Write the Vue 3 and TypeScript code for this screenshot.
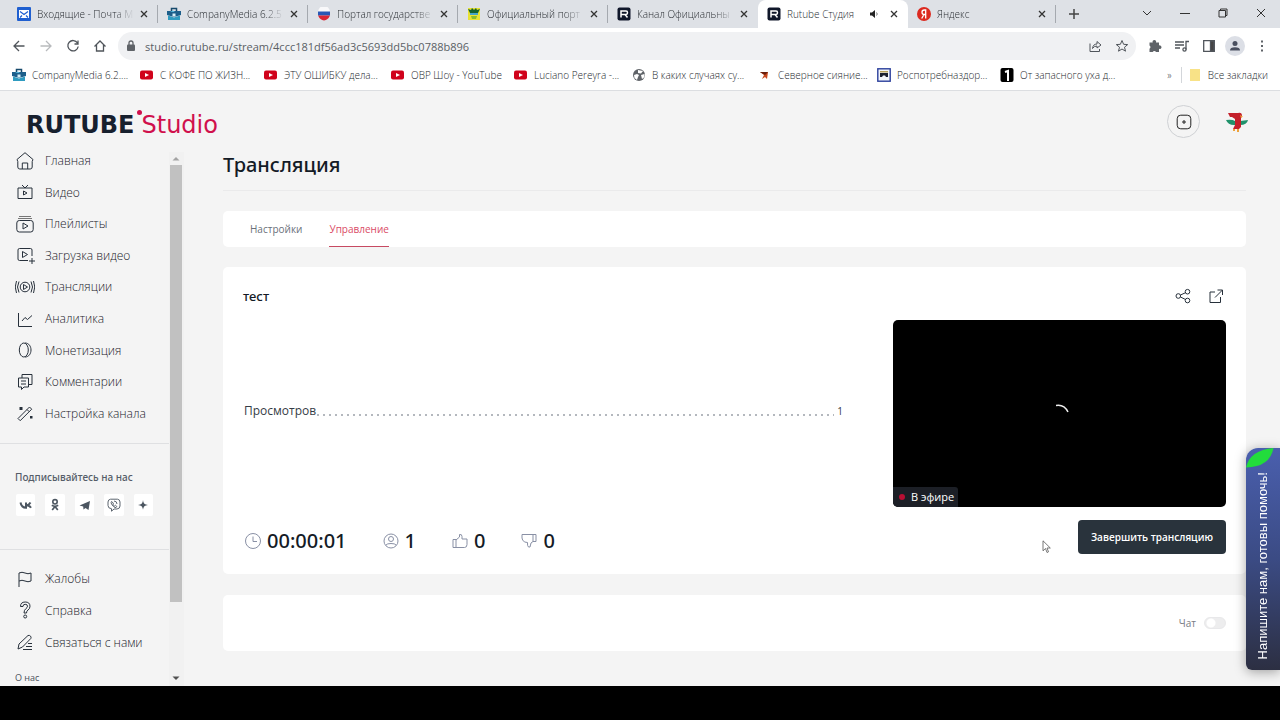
<script setup lang="ts">
import { ref } from 'vue'

interface BrowserTab { title: string; icon: string; active?: boolean; sound?: boolean }
interface LinkItem { label: string; icon: string }

const tabs: BrowserTab[] = [
  { title: 'Входящие - Почта М', icon: 'f-mail' },
  { title: 'CompanyMedia 6.2.5', icon: 'f-case' },
  { title: 'Портал государстве', icon: 'f-flag' },
  { title: 'Официальный порт', icon: 'f-crest' },
  { title: 'Канал Официальны', icon: 'f-rutube' },
  { title: 'Rutube Студия', icon: 'f-rutube', active: true, sound: true },
  { title: 'Яндекс', icon: 'f-yandex' },
]

const bookmarks: LinkItem[] = [
  { label: 'CompanyMedia 6.2....', icon: 'f-case' },
  { label: 'С КОФЕ ПО ЖИЗН...', icon: 'f-youtube' },
  { label: 'ЭТУ ОШИБКУ дела...', icon: 'f-youtube' },
  { label: 'ОВР Шоу - YouTube', icon: 'f-youtube' },
  { label: 'Luciano Pereyra -...', icon: 'f-youtube' },
  { label: 'В каких случаях су...', icon: 'f-globe' },
  { label: 'Северное сияние...', icon: 'f-arrow' },
  { label: 'Роспотребназдор...', icon: 'f-rpn' },
  { label: 'От запасного уха д...', icon: 'f-one' },
]

const mainNav: LinkItem[] = [
  { label: 'Главная', icon: 'n-home' },
  { label: 'Видео', icon: 'n-video' },
  { label: 'Плейлисты', icon: 'n-playlist' },
  { label: 'Загрузка видео', icon: 'n-upload' },
  { label: 'Трансляции', icon: 'n-live' },
  { label: 'Аналитика', icon: 'n-chart' },
  { label: 'Монетизация', icon: 'n-coin' },
  { label: 'Комментарии', icon: 'n-comments' },
  { label: 'Настройка канала', icon: 'n-wand' },
]

const helpNav: LinkItem[] = [
  { label: 'Жалобы', icon: 'n-flag' },
  { label: 'Справка', icon: 'n-help' },
  { label: 'Связаться с нами', icon: 'n-contact' },
]

const socials: LinkItem[] = [
  { label: 'ВКонтакте', icon: 's-vk' },
  { label: 'Одноклассники', icon: 's-ok' },
  { label: 'Telegram', icon: 's-telegram' },
  { label: 'Viber', icon: 's-viber' },
  { label: 'Дзен', icon: 's-zen' },
]

const stats = [
  { name: 'Длительность', icon: 'i-clock', value: '00:00:01' },
  { name: 'Зрители', icon: 'i-user', value: '1' },
  { name: 'Нравится', icon: 'i-like', value: '0' },
  { name: 'Не нравится', icon: 'i-dislike', value: '0' },
]

const address = ref('studio.rutube.ru/stream/4ccc181df56ad3c5693dd5bc0788b896')
const chatOn = ref(false)
</script>

<template>
  <div class="screen">
    <svg class="sprite" aria-hidden="true">
      <symbol id="f-mail" viewBox="0 0 14 14"><rect width="14" height="14" rx="1" fill="#1f5fd0" /><rect x="2" y="3" width="10" height="8" fill="#fff" /><path d="M3 4.500l4 3 4-3M3 10.500l2-2M11 10.500l-2-2" fill="none" stroke="#1f5fd0" stroke-width="1.200" /></symbol>
      <symbol id="f-case" viewBox="0 0 14 14"><path d="M4.500 4V1.500h5V4" fill="none" stroke="#174a6c" stroke-width="1.500" /><path d="M0 4h14v4L7 10 0 8z" fill="#1d5f8b" /><path d="M1 8.500l6 2 6-2V13H1z" fill="#2f9bc0" /><path d="M5.500 6.500h3v3h-3z" fill="#d7eef7" /><path d="M3 5l3-1.500L8 5z" fill="#56b8dc" /></symbol>
      <symbol id="f-flag" viewBox="0 0 14 14"><path d="M1 5a6 6 0 0 1 12 0z" fill="#f8f8fa" /><path d="M1 4.500h12v4H1z" fill="#2858b5" /><path d="M1 8.500h12Q11 13 7 13.500 3 13 1 8.500z" fill="#d92735" /></symbol>
      <symbol id="f-crest" viewBox="0 0 14 14"><path d="M1 1h12v12H1z" fill="#e9e233" /><path d="M1 2l3 1 1-2 2 2 2-2 1 2 3-1-2 4H3z" fill="#14632f" /><path d="M3 6h8v2H3z" fill="#45a5c8" /><path d="M4 9h6l-1 3H5z" fill="#8bbd2c" /></symbol>
      <symbol id="f-rutube" viewBox="0 0 14 14"><rect x=".5" y=".5" width="13" height="13" rx="2" fill="#10172a" /><path d="M4 10.500V4h5q1.500 0 1.500 1.700T9 7.500H4M8 7.500l2.500 3" fill="none" stroke="#fff" stroke-width="1.500" /></symbol>
      <symbol id="f-yandex" viewBox="0 0 14 14"><circle cx="7" cy="7" r="7" fill="#dc2a20" /><path d="M8.700 11.500V3H7.300Q5 3 5 5.200T7.300 7.500h1.400M7 7.500l-2.300 4" fill="none" stroke="#fff" stroke-width="1.300" /></symbol>
      <symbol id="f-youtube" viewBox="0 0 14 14"><rect y="2.500" width="13" height="9" rx="2" fill="#d0021b" /><path d="M5 5l4 2-4 2z" fill="#fff" /></symbol>
      <symbol id="f-globe" viewBox="0 0 14 14"><circle cx="7" cy="7" r="6" fill="#5f6368" /><path d="M2 7l3-1 2 1-1 2-1 3-2.500-2zM6 2l5 1-2 2.500-3-.5zM9 7l3.500-1v3L10 11z" fill="#fff" /></symbol>
      <symbol id="f-arrow" viewBox="0 0 14 14"><path d="M2 4h8L9 11l-2-2-3 2 2-4z" fill="#c8481d" /><path d="M2 4h8L7 7z" fill="#69200e" /></symbol>
      <symbol id="f-rpn" viewBox="0 0 14 14"><rect x=".8" y=".8" width="12.400" height="12.400" fill="#f4f6fb" stroke="#2b3f9c" stroke-width="1.400" /><path d="M3 3h8v1.500H3z" fill="#b7a15c" /><path d="M3 5h8v4H9L8 7.500H6L5 9H3z" fill="#1c2030" /></symbol>
      <symbol id="f-one" viewBox="0 0 14 14"><rect x=".5" width="13" height="14" rx="2" fill="#000" /><path d="M5 4l3-1v10" fill="none" stroke="#fff" stroke-width="2" /></symbol>

      <symbol id="n-home" viewBox="0 0 20 20"><path d="M2 8.500L10 1.700l8 6.800-.8 2V16q0 2-2 2H4.800q-2 0-2-2v-5.500zM7.300 18v-6h5.400v6" /></symbol>
      <symbol id="n-video" viewBox="0 0 20 20"><path d="M3 6h14v10.500H3zM7 3l3 3M13 3l-3 3M8.500 9v4l3.500-2z" /></symbol>
      <symbol id="n-playlist" viewBox="0 0 20 20"><path d="M4 2.500h12M3 4.500h14" stroke="#777" /><rect x="1.800" y="6.500" width="16.400" height="11.500" rx="2.500" /><path d="M8 9v6l5-3z" /></symbol>
      <symbol id="n-upload" viewBox="0 0 20 20"><path d="M17 11V5q0-1.500-1.500-1.500h-11Q3 3.500 3 5v9q0 1.500 1.500 1.500H13M7.500 6.500v6l5-3zM17 13v6M14 16h6" /></symbol>
      <symbol id="n-live" viewBox="0 0 20 20"><circle cx="10" cy="10" r="4.800" /><path d="M8.500 7.500v5l4-2.500zM4 4.500q-3 5.500 0 11M16 4.500q3 5.500 0 11M1.500 4q-2.500 6 0 12M18.500 4q2.500 6 0 12" /></symbol>
      <symbol id="n-chart" viewBox="0 0 20 20"><path d="M3.500 4v13.500H17M7 12l3-3.500 2.500 2L17 6.500" /></symbol>
      <symbol id="n-coin" viewBox="0 0 20 20"><ellipse cx="8.800" cy="10" rx="4.500" ry="7" /><path d="M10 3c4 0 6 3.500 6 7s-2 7-6 7" /></symbol>
      <symbol id="n-comments" viewBox="0 0 20 20"><path d="M3.500 6h10v9H9l-2.500 2.500V15h-3zM7 6V2.500h10v10h-3.500M6 9h5M6 12h5" /></symbol>
      <symbol id="n-wand" viewBox="0 0 20 20"><path d="M3 15.500L14.500 4l2.200 2.200L5.200 17.700zM12 6.500l2.200 2.200" /><path d="M4.500 4h3v3h-3zM15 13h2.500v2.500H15z" fill="#27303b" stroke="none" /></symbol>
      <symbol id="n-flag" viewBox="0 0 20 20"><path d="M4 18V4q3-1.500 6 0t6 0v8q-3 1.500-6 0t-6 0" /></symbol>
      <symbol id="n-help" viewBox="0 0 20 20"><path d="M5.500 6.500Q5.500 2 10.200 2t4.800 4.200q0 2.500-2 3.800-1.500 1-1.500 3H9q0-3 2-4.500 1.500-1 1.500-2.300 0-1.900-2.300-1.900T8 6.500z" /><circle cx="10.200" cy="16.500" r="1.500" /></symbol>
      <symbol id="n-contact" viewBox="0 0 20 20"><path d="M3 17l1-5 9-8.500q1.500-.5 2.500.6t.3 2.400L7.500 15 3 17M8 17.500h9M11 14.500h6M13 11.500h4" /></symbol>

      <symbol id="s-vk" viewBox="0 0 14 14"><path d="M1.500 4.500Q2.500 9.700 7 9.700V4.500M7.500 7.500Q10 7 11.500 4.500M8 7.200q3 .5 4 2.500" fill="none" stroke="#4c5661" stroke-width="2" /></symbol>
      <symbol id="s-ok" viewBox="0 0 14 14"><circle cx="7" cy="3.800" r="2.200" fill="none" stroke="#4c5661" stroke-width="1.600" /><path d="M3.800 7.300q3.200 2 6.400 0M7 8.500L4.200 12M7 8.500L9.800 12" fill="none" stroke="#4c5661" stroke-width="1.700" /></symbol>
      <symbol id="s-telegram" viewBox="0 0 14 14"><path d="M1.500 7.500L12 3l-1.500 9-3-2-2 1.500-.3-3z" fill="#4c5661" /></symbol>
      <symbol id="s-viber" viewBox="0 0 14 14"><path d="M3.500 1.200h7Q13 1.500 13 4v4q0 2.700-3 3H7l-2.500 2.200v-2.500Q1 10.500 1 7.500V4q0-2.500 2.500-2.800zM4.500 3.500q-1 1 .3 3t3.200 3q1.500.3 1.800-1L8.500 7.300l-1 .7Q6 7.300 5.800 6l.7-.8zM7 3q3 .2 3 3" fill="none" stroke="#5c656f" /></symbol>
      <symbol id="s-zen" viewBox="0 0 14 14"><path d="M7 2q.2 4.800 5 5-4.800.2-5 5-.2-4.800-5-5 4.800-.2 5-5z" fill="#4c5661" /></symbol>

      <symbol id="i-clock" viewBox="0 0 18 18"><circle cx="9" cy="9" r="7.500" /><path d="M9 4.500V9.500h4" /></symbol>
      <symbol id="i-user" viewBox="0 0 18 18"><circle cx="9" cy="9" r="7" /><circle cx="9" cy="7" r="2.500" /><path d="M4 13q1-1.500 5-1.500t5 1.500" /></symbol>
      <symbol id="i-like" viewBox="0 0 18 18"><path d="M2 7.500h3v8H2zM5 8l3.500-3V2.500q2.500-.5 2.500 2V7h5v5.500q0 3-2.500 3H5" /></symbol>
      <symbol id="i-dislike" viewBox="0 0 18 18"><path d="M13 2.500h3v7h-3zM13 9.500l-2 1.500-1 4H8.500q-1.300-1-1-4.500L4.500 10Q2 8 2 6V2.500h11" /></symbol>
    </svg>

    <div class="tabstrip">
      <div v-for="tab in tabs" :key="tab.title" class="tab" :class="{ active: tab.active }">
        <svg class="fav"><use :href="'#' + tab.icon" /></svg>
        <span class="tab-title">{{ tab.title }}</span>
        <svg v-if="tab.sound" class="sound" viewBox="0 0 10 10"><path d="M0 3.500h2L5 1v8L2 6.500H0z" fill="#222" /><path d="M6.500 3.500q1.500 1.500 0 3" fill="none" stroke="#777" /></svg>
        <button class="tab-close" aria-label="Закрыть вкладку"><svg viewBox="0 0 8 8"><path d="M1 1l6 6M7 1L1 7" /></svg></button>
      </div>
      <button class="new-tab" aria-label="Новая вкладка"><svg viewBox="0 0 10 10"><path d="M5 0v10M0 5h10" /></svg></button>
      <div class="window-buttons">
        <button aria-label="Поиск вкладок"><svg viewBox="0 0 10 10"><path d="M1 3l4 4 4-4" /></svg></button>
        <button aria-label="Свернуть"><svg viewBox="0 0 10 10"><path d="M0 5.500h10" /></svg></button>
        <button aria-label="Развернуть"><svg viewBox="0 0 10 10"><path d="M1 2.500h6.500V9H1zM2.500 2.500V1H9v6.500H7.500" /></svg></button>
        <button aria-label="Закрыть"><svg viewBox="0 0 10 10"><path d="M1 1l8 8M9 1L1 9" /></svg></button>
      </div>
    </div>

    <div class="toolbar">
      <button aria-label="Назад"><svg viewBox="0 0 14 14"><path d="M12.500 7H2M7 2L2 7l5 5" /></svg></button>
      <button class="dim" aria-label="Вперёд"><svg viewBox="0 0 14 14"><path d="M1.500 7H12M7 2l5 5-5 5" /></svg></button>
      <button aria-label="Обновить"><svg viewBox="0 0 14 14"><path d="M11.500 4A5.200 5.200 0 1 0 12.200 7.500M12 1.500V5H8.500" /></svg></button>
      <button aria-label="Главная страница"><svg viewBox="0 0 14 14"><path d="M1.500 7.500L7 2l5.500 5.500M3.500 6v6h7V6" /></svg></button>
      <div class="omnibox">
        <svg class="lock" viewBox="0 0 10 12"><rect x="1" y="4.500" width="8" height="6.500" rx="1" fill="#5f6368" /><path d="M3 5V3q0-2 2-2t2 2v2" fill="none" stroke="#5f6368" stroke-width="1.300" /></svg>
        <input v-model="address" aria-label="Адресная строка" spellcheck="false">
        <button aria-label="Поделиться страницей"><svg class="thin" viewBox="0 0 14 14"><path d="M2 4.500v8h9.500V10M4.500 9.500Q5 5 9 5V2.500L13 6 9 9V7Q6 7 4.500 9.500z" /></svg></button>
        <button aria-label="Добавить закладку"><svg class="thin" viewBox="0 0 14 14"><path d="M7 1.500l1.600 3.800 4.100.3-3.200 2.600 1 4L7 10l-3.500 2.200 1-4-3.200-2.600 4.100-.3z" /></svg></button>
      </div>
      <button aria-label="Расширения"><svg viewBox="0 0 14 14"><path d="M1.500 3.500h3.200a1.800 1.800 0 1 1 3.300 0H11v3a1.800 1.800 0 1 1 0 3.300V13H8a1.800 1.800 0 0 0-3.300 0H1.500V9.700a1.800 1.800 0 0 0 0-3.200z" fill="#5f6368" stroke="none" /></svg></button>
      <button aria-label="Медиа"><svg viewBox="0 0 14 14"><path d="M0 3h9M0 6h9M0 9h5M11 10.500V2.500h3" /><circle cx="9.500" cy="10.500" r="1.600" /></svg></button>
      <button aria-label="Боковая панель"><svg viewBox="0 0 14 14"><path d="M1.700 1.700h10.600v10.600H1.700z" /><path d="M8.500 2h3.500v10H8.500z" fill="#444" /></svg></button>
      <button class="profile" aria-label="Профиль"><svg viewBox="0 0 14 14"><circle cx="7" cy="4.500" r="2.500" fill="#4a5060" stroke="none" /><path d="M2 11.500Q2 8.200 7 8.200t5 3.300z" fill="#4a5060" stroke="none" /></svg></button>
      <button aria-label="Меню"><svg viewBox="0 0 14 14"><path d="M6 1.500h2v2H6zM6 6h2v2H6zM6 10.500h2v2H6z" fill="#5f6368" stroke="none" /></svg></button>
    </div>

    <nav class="bookmarks" aria-label="Закладки">
      <a v-for="mark in bookmarks" :key="mark.label" href="#"><svg class="fav"><use :href="'#' + mark.icon" /></svg>{{ mark.label }}</a>
      <button class="more" aria-label="Другие закладки">»</button>
      <a class="all" href="#"><svg class="folder" viewBox="0 0 10 12"><path d="M0 0h10v12H0z" fill="#f8e287" /></svg>Все закладки</a>
    </nav>

    <div class="studio">
      <header class="studio-head">
        <a class="logo" href="#" aria-label="RUTUBE Studio"><b>RUTUBE</b><i class="logo-dot"></i><span>Studio</span></a>
        <button class="add" aria-label="Добавить"><svg viewBox="0 0 16 16"><rect x="1.200" y="1.200" width="13.600" height="13.600" rx="3.500" /><path d="M8 6v4M6 8h4" /></svg></button>
        <button class="avatar" aria-label="Мой канал">
          <svg viewBox="0 0 24 24"><path d="M1 10q6-1 9 1h5l8-1q-1 5-8 5H9q-6 0-8-5z" fill="#20926b" /><path d="M3 3h10q4-1 4 3l-1 2v9l-2 2H8l2-4V9L7 7H5z" fill="#c4202b" /><path d="M15 5l3 1.500-2 1.500zM8 19h2v2H8zM12 19h2v3h-2z" fill="#eea33c" /></svg>
        </button>
      </header>

      <aside class="sidebar">
        <div class="side-scroll">
          <nav class="side-nav" aria-label="Разделы">
            <a v-for="item in mainNav" :key="item.label" href="#"><svg class="line"><use :href="'#' + item.icon" /></svg>{{ item.label }}</a>
          </nav>
          <section class="follow">
            <h2>Подписывайтесь на нас</h2>
            <div class="social-row">
              <a v-for="item in socials" :key="item.label" href="#" :aria-label="item.label"><svg><use :href="'#' + item.icon" /></svg></a>
            </div>
          </section>
          <nav class="side-nav help" aria-label="Помощь">
            <a v-for="item in helpNav" :key="item.label" href="#"><svg class="line"><use :href="'#' + item.icon" /></svg>{{ item.label }}</a>
          </nav>
          <a class="about" href="#">О нас</a>
        </div>
        <div class="scrollbar" aria-hidden="true">
          <svg viewBox="0 0 14 12"><path d="M3.500 8h7L7 4.500z" fill="#a3a3a3" /></svg>
          <div class="thumb"></div>
          <div class="rest"></div>
          <svg viewBox="0 0 14 12"><path d="M3.500 3h7L7 6.500z" fill="#505050" /></svg>
        </div>
      </aside>

      <main class="content">
        <h1>Трансляция</h1>
        <nav class="card page-tabs" aria-label="Вкладки трансляции">
          <a href="#">Настройки</a>
          <a href="#" class="current" aria-current="page">Управление</a>
        </nav>

        <section class="card stream">
          <div class="stream-head">
            <h2>тест</h2>
            <button aria-label="Поделиться"><svg viewBox="0 0 16 16"><circle cx="3.300" cy="8" r="2.300" /><circle cx="12.500" cy="3.700" r="2.300" /><circle cx="12.500" cy="12.500" r="2.300" /><path d="M5.500 7l5-2.300M5.500 9l5 2.500" /></svg></button>
            <button aria-label="Открыть в новом окне"><svg viewBox="0 0 16 16"><path d="M7 4H2v10.500h10.500V9M7 9.500L14.500 2M9.500 2h5v5" /></svg></button>
          </div>
          <div class="stream-body">
            <div class="views"><span>Просмотров</span><i class="leader"></i><span>1</span></div>
            <div class="player">
              <svg class="spinner" viewBox="0 0 24 24"><path d="M8 3.500Q16 2 20 10" /></svg>
              <span class="on-air"><i></i>В эфире</span>
            </div>
          </div>
          <div class="stream-foot">
            <span v-for="stat in stats" :key="stat.name" class="stat" :title="stat.name"><svg><use :href="'#' + stat.icon" /></svg>{{ stat.value }}</span>
            <button class="finish">Завершить трансляцию</button>
          </div>
        </section>

        <section class="card chat">
          <label for="chat-switch">Чат</label>
          <input id="chat-switch" v-model="chatOn" type="checkbox">
        </section>
      </main>
    </div>

    <div class="strip"></div>

    <button class="support">
      <svg class="leaf" viewBox="0 0 28 20"><path d="M0 19.500Q4 2 27.500 0 24 19 0 19.500z" fill="#22dc3c" /></svg>
      <span>Напишите нам, готовы помочь!</span>
    </button>
    <svg class="pointer" viewBox="0 0 10 14"><path d="M1 .8v10l2.500-2.300L5 12.500l1.500-.7L5 8h3.300z" fill="#fff" stroke="#555" stroke-width=".8" /></svg>
  </div>
</template>

<style>
body { margin: 0; background: #000; }
</style>

<style scoped>
* { box-sizing: border-box; }
.screen {
  position: relative;
  display: flex;
  flex-direction: column;
  min-height: 100vh;
  background: #f4f4f4;
  color: #141b26;
  font-family: "Open Sans", "Noto Sans", sans-serif;
  font-size: 12px;
}
.sprite { position: absolute; width: 0; height: 0; }
button { padding: 0; border: 0; background: none; color: inherit; font: inherit; cursor: pointer; }
a { color: inherit; text-decoration: none; }
h1, h2 { margin: 0; }
svg { flex: none; display: block; }

.tabstrip { display: flex; height: 28px; padding-left: 8px; background: #dee1e6; font-size: 10px; font-weight: 300; color: #2a2e33; }
.tab { display: flex; align-items: center; flex: 0 1 150px; min-width: 0; height: 28px; padding: 0 9px; border-right: 1px solid #a5a9af; border-image: linear-gradient(transparent 20%, #a5a9af 20%, #a5a9af 80%, transparent 80%) 1; }
.tab.active, .tab:has(+ .active) { border-image: none; border-color: transparent; }
.tab.active { background: #fff; border-radius: 8px 8px 0 0; }
.tab:nth-child(7) { flex-basis: 148px; }
.fav { width: 14px; height: 14px; }
.tab-title { flex: 1; min-width: 0; margin-left: 6px; overflow: hidden; white-space: nowrap; mask-image: linear-gradient(to right, #000 80%, transparent); }
.active .tab-title { mask-image: none; }
.sound { width: 10px; height: 10px; margin: 0 4px; }
.tab-close { margin-left: 6px; }
.tab-close svg { width: 8px; height: 8px; stroke: #333; stroke-width: 1.300; }
.new-tab { width: 36px; }
.new-tab svg { width: 10px; height: 10px; margin: 0 auto; stroke: #444; stroke-width: 1.500; }
.window-buttons { display: flex; margin-left: auto; }
.window-buttons button { width: 38px; height: 26px; }
.window-buttons svg { width: 10px; height: 10px; margin: 0 auto; fill: none; stroke: #333; }

.toolbar { display: flex; align-items: center; height: 36px; padding: 0 5px; background: #fff; }
.toolbar button { display: grid; place-items: center; width: 27px; height: 28px; }
.toolbar svg { width: 14px; height: 14px; fill: none; stroke: #50555b; stroke-width: 1.300; }
.toolbar .thin { stroke-width: 1; }
.toolbar .dim { opacity: .4; }
.omnibox { display: flex; align-items: center; flex: 1; height: 28px; margin: 0 5px; padding: 0 1px 0 8px; border-radius: 14px; background: #f0f1f3; }
.toolbar .lock { width: 10px; height: 12px; stroke: none; }
.omnibox input { flex: 1; min-width: 0; margin-left: 9px; padding: 0; border: 0; outline: 0; background: none; color: #5a5f65; font: inherit; font-size: 11px; }
.toolbar .profile { width: 20px; height: 20px; margin: 0 3px; border-radius: 50%; background: #dcdfe6; }

.bookmarks { display: grid; grid-template-columns: 128px 124px 127px 123px 118px 126px 119px 123px auto 1fr auto; align-items: center; height: 27px; padding: 0 12px 4px; border-bottom: 1px solid #dcdee1; background: #fff; color: #25292e; font-size: 10px; font-weight: 300; white-space: nowrap; }
.bookmarks a { display: flex; align-items: center; gap: 6px; }
.more { justify-self: end; padding-right: 9px; }
.bookmarks .all { gap: 8px; padding-left: 8px; border-left: 1px solid #d3d6da; line-height: 16px; }
.folder { width: 10px; height: 12px; }

.studio { flex: 1; display: grid; grid-template: 61px 1fr / 184px 1fr; }
.studio-head { grid-column: 1 / -1; display: flex; align-items: center; padding: 0 26px; }
.logo { position: relative; display: flex; margin-right: auto; padding-top: 6px; font: 24px/28px "DejaVu Sans", sans-serif; color: #d0104c; }
.logo b { margin-right: 7px; color: #17202e; }
.logo-dot { position: absolute; left: 111px; top: 5px; width: 5px; height: 5px; border-radius: 50%; background: #d0104c; }
.add { display: grid; place-items: center; width: 33px; height: 33px; border: 1px solid #cfd1d4; border-radius: 50%; }
.add svg { width: 16px; height: 16px; fill: none; stroke: #222; }
.avatar { width: 24px; height: 24px; margin: 0 5px 0 25px; }
.avatar svg { width: 24px; height: 24px; }

.sidebar { display: flex; min-height: 0; }
.side-scroll { flex: 1; min-width: 0; font-weight: 300; }
.side-nav { display: grid; grid-auto-rows: 1fr; min-height: 299px; margin-top: -7px; padding: 0 15px 14px; border-bottom: 1px solid #dfe0e2; color: #1b222b; }
.side-nav a { display: flex; align-items: center; gap: 10px; }
.line { width: 20px; height: 20px; fill: none; stroke: #27303b; }
.side-nav.help { min-height: 95px; padding-bottom: 0; border: 0; margin-top: 13px; }
.follow { height: 106px; padding: 24px 16px 0 15px; border-bottom: 1px solid #dfe0e2; }
.follow h2 { font: 500 10px/18px "Noto Sans", sans-serif; color: #555d68; }
.social-row { display: flex; gap: 10px; margin-top: 8px; padding-left: 1px; }
.social-row a { display: grid; place-items: center; width: 20px; height: 22px; border-radius: 2px; background: #fff; }
.social-row svg { width: 14px; height: 14px; }
.about { display: block; margin: 13px 15px 0; color: #4a515b; font-size: 9px; font-weight: 400; line-height: 14px; }
.scrollbar { display: flex; flex-direction: column; width: 15px; background: #f1f1f1; }
.scrollbar svg { width: 14px; height: 13px; }
.thumb { flex: 437; width: 12px; margin-left: 1px; background: #c1c1c1; }
.rest { flex: 71; }

.content { min-width: 0; padding: 0 34px 35px 39px; }
h1 { padding-bottom: 12px; border-bottom: 1px solid #eaeaeb; font: 500 20px/26px "Noto Sans", sans-serif; }
.card { border-radius: 5px; background: #fff; }
.page-tabs { display: flex; gap: 27px; height: 36px; margin-top: 20px; padding: 0 27px; color: #6a707a; font-size: 10px; line-height: 37px; }
.page-tabs a { height: 36px; }
.page-tabs .current { border-bottom: 1px solid #c74a62; color: #da4b66; }
.stream { margin-top: 20px; padding: 19px 20px 20px; }
.stream-head { display: flex; align-items: center; gap: 17px; height: 20px; padding-right: 2px; }
.stream-head h2 { flex: 1; font: 500 13px/18px "Noto Sans", sans-serif; }
.stream-head svg { width: 16px; height: 16px; fill: none; stroke: #27303b; }
.stream-body { display: grid; grid-template-columns: 1fr 333px; gap: 50px; align-items: center; margin-top: 14px; }
.views { display: flex; padding: 0 0 5px 1px; color: #353c46; line-height: 18px; }
.views span:last-child { font-size: 10px; }
.leader { flex: 1; margin: 0 3px 4px 1px; background: radial-gradient(circle at 1px 1px, #b4b8be 1px, transparent 1px) 0 100% / 6px 2px repeat-x; }
.player { position: relative; aspect-ratio: 16 / 9; overflow: hidden; border-radius: 5px; background: #000; }
.spinner { position: absolute; inset: 0; width: 24px; height: 24px; margin: auto; fill: none; stroke: #eee; stroke-width: 1.500; }
.on-air { position: absolute; left: 0; bottom: 0; display: flex; align-items: center; gap: 6px; height: 20px; padding: 0 4px 1px 6px; border-top-right-radius: 3px; background: #1c1f26; color: #fff; font-size: 11px; }
.on-air i { width: 6px; height: 6px; border-radius: 50%; background: #b80f33; }
.stream-foot { display: flex; align-items: center; gap: 35px; margin-top: 13px; padding-left: 1px; }
.stat { display: flex; align-items: center; gap: 5px; padding-top: 8px; font: 500 20px/26px "Noto Sans", sans-serif; }
.stat svg { width: 18px; height: 18px; fill: none; stroke: #8990a5; }
.finish { height: 34px; margin-left: auto; padding: 0 13px; border-radius: 4px; background: #29333c; color: #fff; font-size: 10px; font-weight: 600; white-space: nowrap; }
.chat { display: flex; align-items: center; justify-content: flex-end; gap: 8px; height: 56px; margin-top: 21px; padding: 0 20px; color: #777c85; font-size: 10px; }
.chat input { appearance: none; width: 22px; height: 12px; margin: 0; border-radius: 6px; border: 1px solid #e8e8ea; background: radial-gradient(circle at 6px 50%, #fff 4px, #ededee 5px); }
.chat input:checked { background: #c74a62; }
.strip { height: 34px; background: #000; }

.support { position: fixed; right: 0; bottom: 50px; width: 34px; height: 222px; border-radius: 12px 0 0 6px; background: linear-gradient(#4a5fae, #3b4b84 50%, #2c2f42); box-shadow: 0 2px 12px rgba(0, 0, 0, .35); color: #fff; }
.support span { display: block; margin: 14px auto 0; writing-mode: vertical-rl; transform: rotate(180deg); font: 13px/18px "Liberation Sans", Arial, sans-serif; white-space: nowrap; }
.leaf { position: absolute; left: 0; top: 0; width: 28px; height: 20px; }
.pointer { position: fixed; left: 1042px; top: 540px; width: 10px; height: 14px; }
</style>
